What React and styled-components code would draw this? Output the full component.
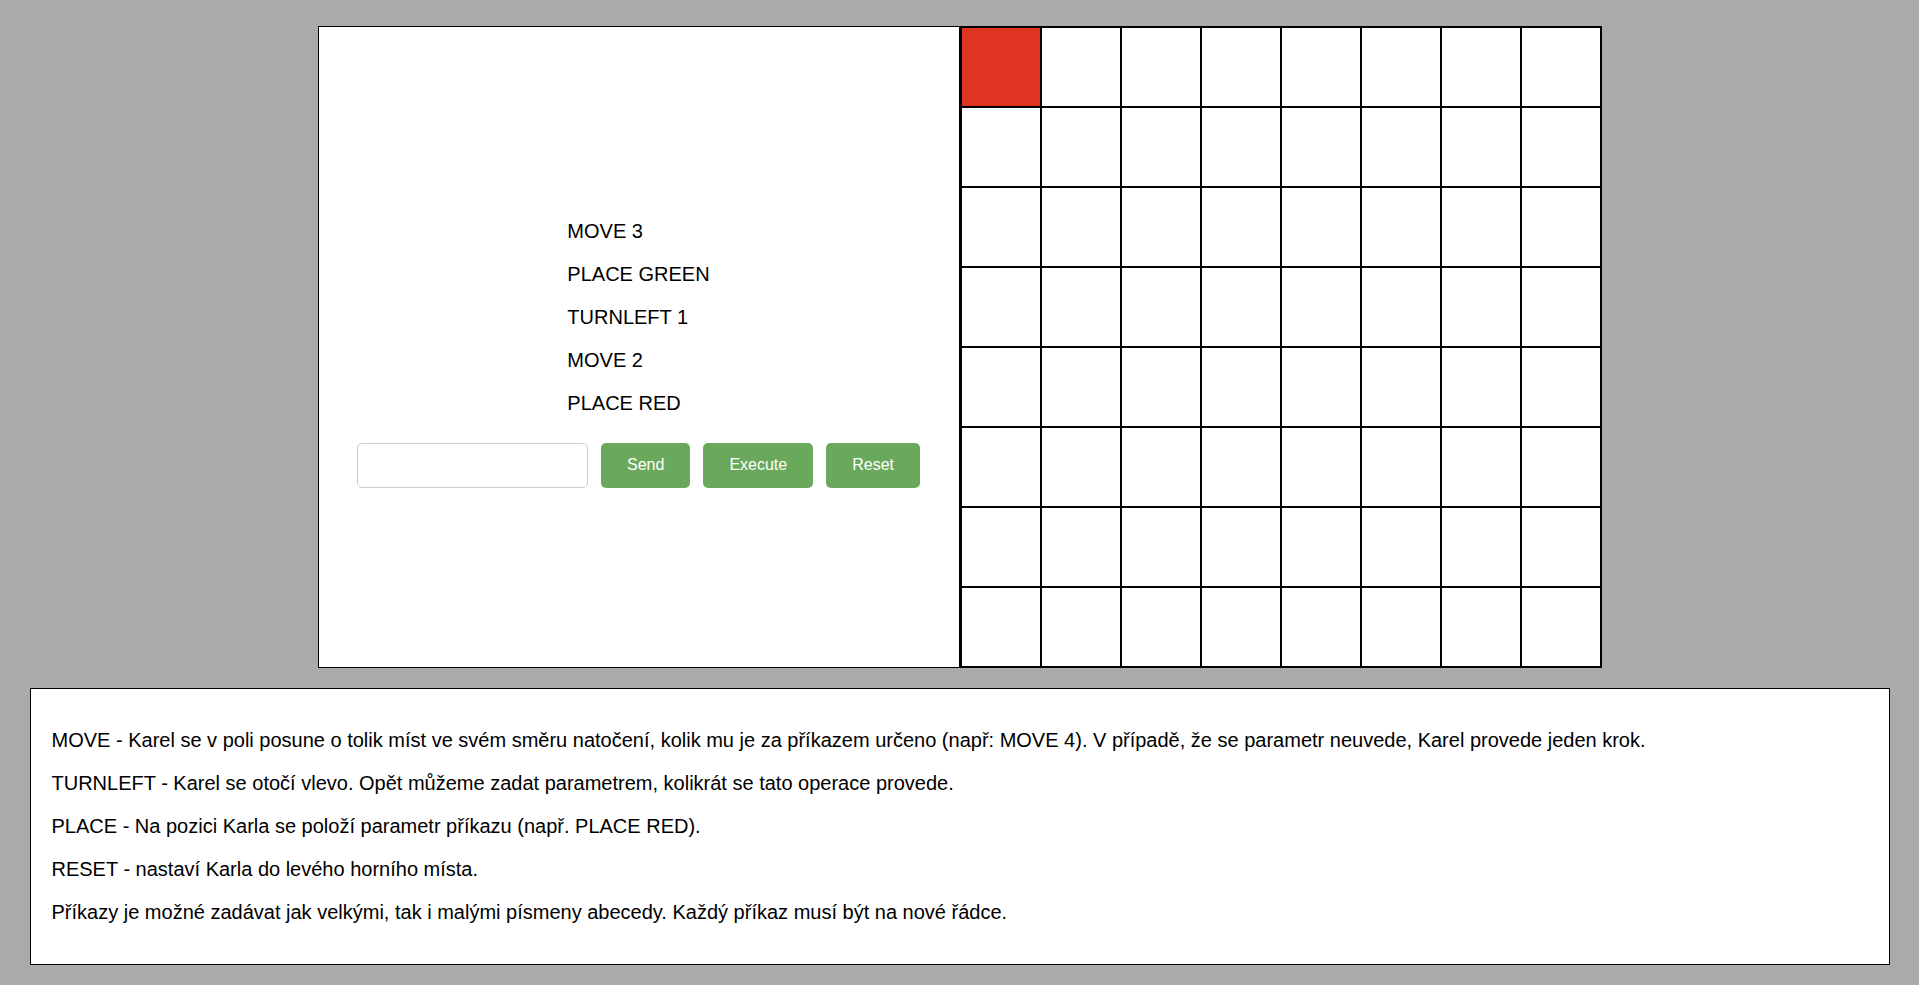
import React from "react";
import styled, { createGlobalStyle } from "styled-components";

const SIZE = 8;
const karel = { row: 0, col: 0 };

const commands = ["MOVE 3", "PLACE GREEN", "TURNLEFT 1", "MOVE 2", "PLACE RED"];

const help = [
  "MOVE - Karel se v poli posune o tolik míst ve svém směru natočení, kolik mu je za příkazem určeno (např: MOVE 4). V případě, že se parametr neuvede, Karel provede jeden krok.",
  "TURNLEFT - Karel se otočí vlevo. Opět můžeme zadat parametrem, kolikrát se tato operace provede.",
  "PLACE - Na pozici Karla se položí parametr příkazu (např. PLACE RED).",
  "RESET - nastaví Karla do levého horního místa.",
  "Příkazy je možné zadávat jak velkými, tak i malými písmeny abecedy. Každý příkaz musí být na nové řádce.",
];

const GlobalStyle = createGlobalStyle`
  html, body {
    margin: 0;
    padding: 0;
    background: #aaaaaa;
    font-family: "Liberation Sans", Arial, sans-serif;
    color: #000;
  }
`;

const Page = styled.div`
  padding-top: 26px;
  display: flex;
  flex-direction: column;
  align-items: center;
  gap: 20px;
`;

const Top = styled.div`
  display: flex;
`;

const Panel = styled.div`
  box-sizing: border-box;
  width: 642px;
  height: 642px;
  border: 1px solid #000;
  background: #fff;
`;

const Controls = styled(Panel)`
  display: flex;
  flex-direction: column;
  align-items: center;
  justify-content: center;
  padding-bottom: 7px;
`;

const List = styled.div`
  font-size: 20px;
  p {
    margin: 20px 0;
  }
`;

const Row = styled.div`
  display: flex;
  gap: 13px;
  margin-top: 8px;
`;

const Input = styled.input`
  box-sizing: border-box;
  width: 231px;
  height: 45px;
  border: 1px solid #cccccc;
  border-radius: 5px;
  background: #fff;
  font-family: inherit;
  font-size: 16px;
  padding: 0 10px;
  outline: none;
`;

const Button = styled.button`
  box-sizing: border-box;
  height: 45px;
  padding: 0 26px;
  border: none;
  border-radius: 5px;
  background: #6aa95c;
  color: #fff;
  font-family: inherit;
  font-size: 16px;
  cursor: pointer;
`;

const Grid = styled(Panel)`
  display: grid;
  grid-template-columns: repeat(${SIZE}, 80px);
  grid-template-rows: repeat(${SIZE}, 80px);
`;

const Cell = styled.div`
  box-sizing: border-box;
  border: 1px solid #000;
  background: ${(p) => (p.$karel ? "#df3422" : "#fff")};
`;

const Help = styled.div`
  box-sizing: border-box;
  width: 1860px;
  border: 1px solid #000;
  background: #fff;
  padding: 20px 21px;
  font-size: 20px;
  p {
    margin: 20px 0;
  }
`;

export default function App() {
  const cells = [];
  for (let r = 0; r < SIZE; r++) {
    for (let c = 0; c < SIZE; c++) {
      cells.push(<Cell key={`${r}-${c}`} $karel={r === karel.row && c === karel.col} />);
    }
  }

  return (
    <>
      <GlobalStyle />
      <Page>
        <Top>
          <Controls>
            <List>
              {commands.map((c, i) => (
                <p key={i}>{c}</p>
              ))}
            </List>
            <Row>
              <Input type="text" />
              <Button>Send</Button>
              <Button>Execute</Button>
              <Button>Reset</Button>
            </Row>
          </Controls>
          <Grid>{cells}</Grid>
        </Top>
        <Help>
          {help.map((t, i) => (
            <p key={i}>{t}</p>
          ))}
        </Help>
      </Page>
    </>
  );
}
